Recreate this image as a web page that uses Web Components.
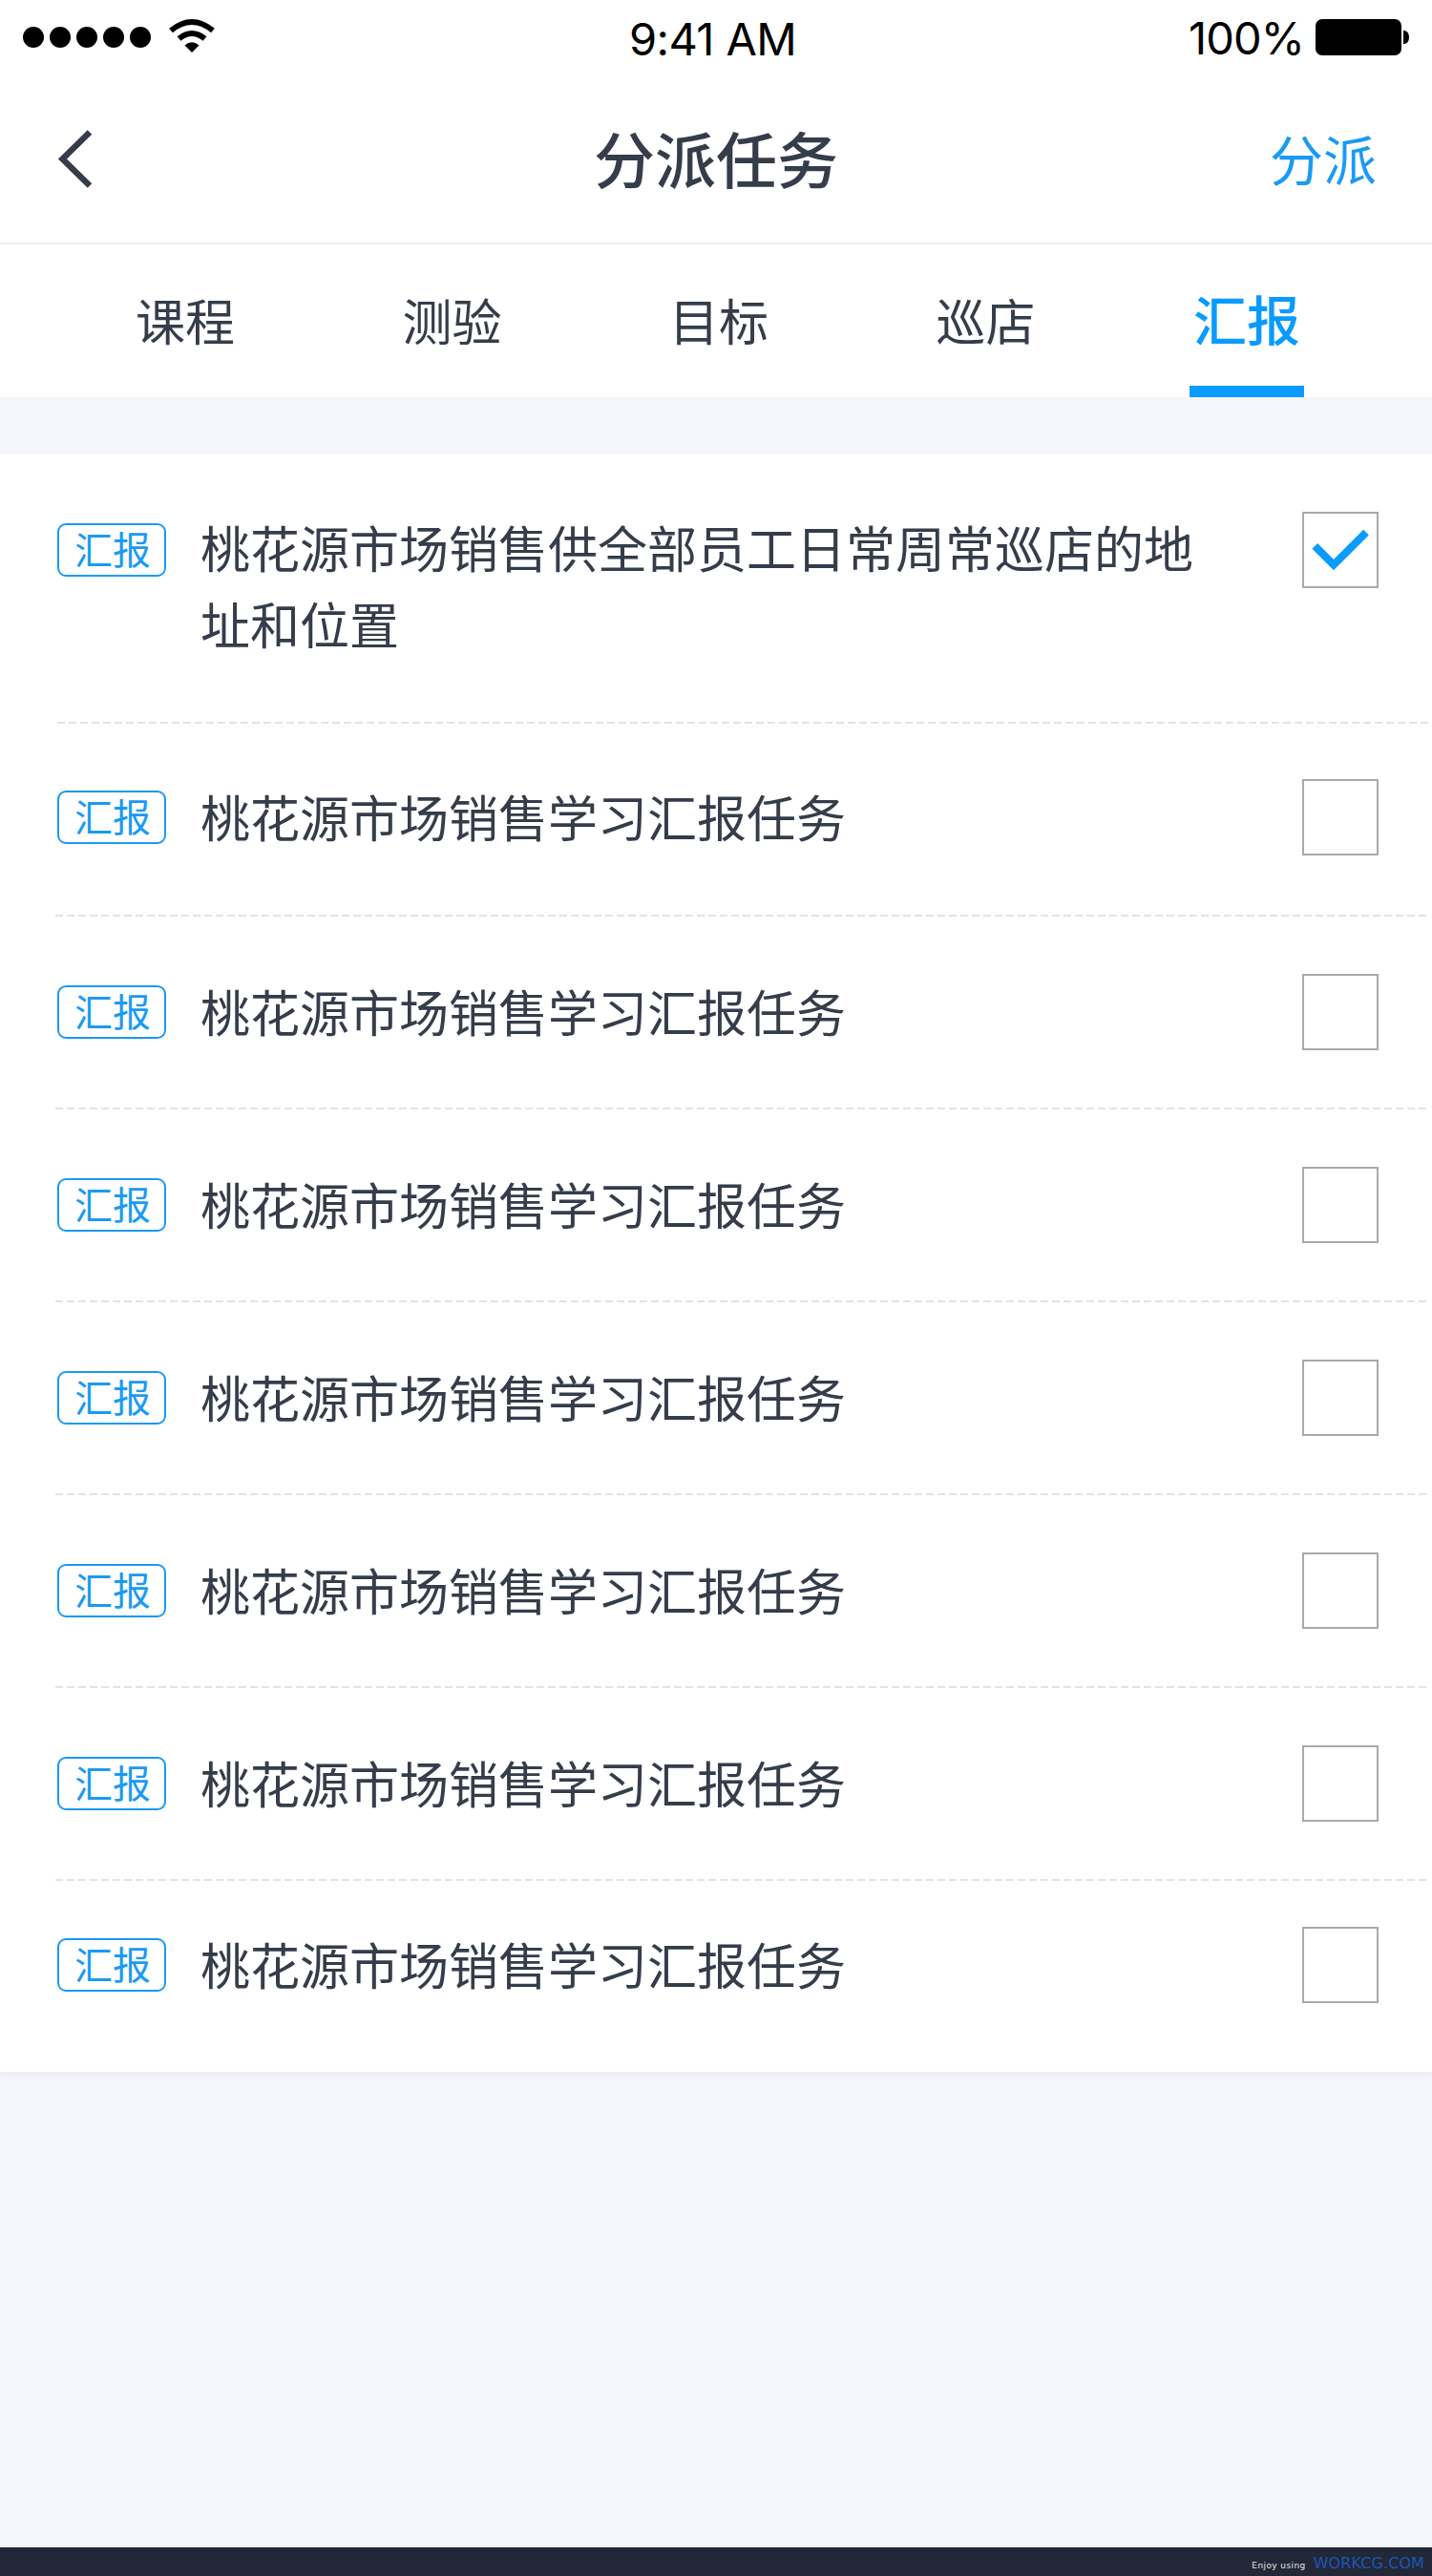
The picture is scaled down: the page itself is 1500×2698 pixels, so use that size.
<!DOCTYPE html>
<html lang="zh-CN">
<head>
<meta charset="UTF-8">
<title>分派任务</title>
<style>
  :root {
    --text-color: #353d4b;
    --primary-color: #0a9bff;
    --badge-color: #1a9af3;
    --page-color: #f5f6fb;
  }

  body {
    margin: 0;
    background: var(--page-color);
    color: var(--text-color);
    font-family: "Noto Sans CJK SC", sans-serif;
  }
</style>
</head>
<body>
<assign-task-page></assign-task-page>

<script>
/**
 * Barra de estado del dispositivo
 * @element status-bar
 */
class StatusBar extends HTMLElement {
  constructor() {
    super();
    this.attachShadow({ mode: "open" });
  }

  connectedCallback() {
    this.shadowRoot.innerHTML = `
      <style>
        :host {
          display: grid;
          grid-template-columns: 1fr auto 1fr;
          height: 80px;
          padding: 0 24px;
          box-sizing: border-box;
          background: #fff;
          color: #000;
          font: 400 47px/80px Inter, sans-serif;
        }
        .signal { padding-top: 18px; line-height: 0; }
        .time { letter-spacing: -0.6px; padding-right: 7px; padding-top: 1px; }
        .power { display: flex; justify-content: flex-end; letter-spacing: -0.9px; }
        .battery { margin: 18px 0 0 12px; }
      </style>
      <div class="signal">
        <svg width="204" height="42" viewBox="24 18 204 42">
          <circle cx="35" cy="39" r="11"/>
          <circle cx="63" cy="39" r="11"/>
          <circle cx="91" cy="39" r="11"/>
          <circle cx="119" cy="39" r="11"/>
          <circle cx="147" cy="39" r="11"/>
          <g fill="none" stroke="#000" stroke-width="6">
            <path d="M179 32Q201 14 223 32"/>
            <path d="M187.500 40.500Q201 29.500 214.500 40.500"/>
          </g>
          <path d="M193.500 47.500Q201 41 208.500 47.500L201 55Z"/>
        </svg>
      </div>
      <span class="time">9:41 AM</span>
      <div class="power">
        <span>100%</span>
        <svg class="battery" width="98" height="42" viewBox="1378 18 98 42">
          <rect x="1378" y="20" width="90" height="38" rx="7"/>
          <path d="M1470 32h1q5 1 5 7t-5 7h-1z"/>
        </svg>
      </div>
    `;
  }
}

/**
 * Cabecera con botón de volver, título y acción
 * @element nav-header
 */
class NavHeader extends HTMLElement {
  constructor() {
    super();
    this.attachShadow({ mode: "open" });
  }

  connectedCallback() {
    this.shadowRoot.innerHTML = `
      <style>
        :host {
          display: grid;
          grid-template-columns: 1fr auto 1fr;
          align-items: center;
          height: 176px;
          padding: 0 58px;
          box-sizing: border-box;
          background: #fff;
          border-bottom: 2px solid #e9eef3;
        }
        .back { display: block; margin-top: -3px; }
        h1 { margin: -7px 0 0; font-size: 64px; font-weight: 500; line-height: 96px; }
        .action { justify-self: end; margin-top: -4px; font-size: 56px; color: var(--badge-color); line-height: 84px; }
      </style>
      <svg class="back" width="44" height="68" viewBox="58 132 44 68" fill="none" stroke="currentColor" stroke-width="6.500">
        <path d="M94 138.500L65.500 166.500L94 194.500"/>
      </svg>
      <h1><slot></slot></h1>
      <span class="action"><slot name="action"></slot></span>
    `;
  }
}

/**
 * Pestaña de tipo de tarea
 * @element task-tab
 *
 * @attr {boolean} active - Marca la pestaña seleccionada
 */
class TaskTab extends HTMLElement {
  constructor() {
    super();
    this.attachShadow({ mode: "open" });
  }

  connectedCallback() {
    this.shadowRoot.innerHTML = `
      <style>
        :host {
          display: block;
          height: 160px;
          box-sizing: border-box;
          padding-top: 2px;
          font-size: 52px;
          line-height: 154px;
        }
        :host([active]) {
          width: 120px;
          padding-top: 0;
          margin-left: -14px;
          border-bottom: 12px solid var(--primary-color);
          color: var(--primary-color);
          font-size: 56px;
          font-weight: 500;
          text-align: center;
        }
      </style>
      <slot></slot>
    `;
  }
}

/**
 * Barra de pestañas
 * @element task-tabs
 */
class TaskTabs extends HTMLElement {
  constructor() {
    super();
    this.attachShadow({ mode: "open" });
  }

  connectedCallback() {
    this.shadowRoot.innerHTML = `
      <style>
        :host {
          display: flex;
          gap: 175.500px;
          padding-left: 142px;
          background: #fff;
        }
      </style>
      <slot></slot>
    `;
  }
}

/**
 * Casilla de selección
 * @element check-box
 *
 * @attr {boolean} checked - Indica si está marcada
 */
class CheckBox extends HTMLElement {
  constructor() {
    super();
    this.attachShadow({ mode: "open" });
  }

  connectedCallback() {
    const mark = this.hasAttribute("checked")
      ? `<polyline points="13.300,35.800 33,55.500 67,21.600" fill="none" stroke="var(--primary-color)" stroke-width="8"/>`
      : "";

    this.shadowRoot.innerHTML = `
      <style>
        :host { display: block; width: 80px; height: 80px; }
        svg { display: block; }
      </style>
      <svg width="80" height="80">
        <rect x="1" y="1" width="78" height="78" fill="none" stroke="#a9a9a9" stroke-width="2"/>
        ${mark}
      </svg>
    `;
  }
}

/**
 * Fila de tarea con etiqueta, texto y casilla
 * @element task-item
 *
 * @attr {string} label - Texto de la etiqueta
 * @attr {boolean} checked - Indica si la tarea está seleccionada
 */
class TaskItem extends HTMLElement {
  constructor() {
    super();
    this.attachShadow({ mode: "open" });
  }

  connectedCallback() {
    const checked = this.hasAttribute("checked") ? "checked" : "";

    this.shadowRoot.innerHTML = `
      <style>
        :host {
          display: flex;
          flex-direction: column;
          height: 202px;
        }
        .row {
          display: flex;
          flex: 1;
          align-items: flex-start;
          padding: 60px 56px 0 60px;
        }
        :host([checked]) { height: 282px; }
        :host(:last-child) { height: 200px; }
        :host(:nth-child(2)) .row { padding-top: 58px; }
        :host(:last-child) .row { padding-top: 48px; }
        .badge {
          width: 114px;
          height: 56px;
          margin: 12px 36px 0 0;
          padding-left: 2px;
          box-sizing: border-box;
          border: 2px solid var(--badge-color);
          border-radius: 9px;
          color: var(--badge-color);
          font-size: 40px;
          line-height: 48px;
          text-align: center;
        }
        .title {
          width: 1060px;
          margin-top: -1px;
          font-size: 52px;
          line-height: 80px;
        }
        :host([checked]) .title { margin-top: -3px; }
        check-box { margin-left: auto; }
        .divider {
          height: 2px;
          margin: 0 6px 0 58px;
          background: repeating-linear-gradient(90deg, #e3e3e3 0 8px, transparent 8px 12px);
        }
        :host([checked]) .divider { margin: 0 4px 0 60px; }
        :host(:last-child) .divider { display: none; }
      </style>
      <div class="row">
        <div class="badge">${this.getAttribute("label")}</div>
        <div class="title"><slot></slot></div>
        <check-box ${checked}></check-box>
      </div>
      <div class="divider"></div>
    `;
  }
}

/**
 * Tarjeta que agrupa las tareas
 * @element task-list
 */
class TaskList extends HTMLElement {
  constructor() {
    super();
    this.attachShadow({ mode: "open" });
  }

  connectedCallback() {
    this.shadowRoot.innerHTML = `
      <style>
        :host {
          display: block;
          margin-top: 60px;
          background: #fff;
          box-shadow: 0 2px 8px rgba(60, 80, 120, 0.08);
          clip-path: inset(0 0 -12px 0);
        }
      </style>
      <slot></slot>
    `;
  }
}

/**
 * Pie de página
 * @element credit-bar
 */
class CreditBar extends HTMLElement {
  constructor() {
    super();
    this.attachShadow({ mode: "open" });
  }

  connectedCallback() {
    this.shadowRoot.innerHTML = `
      <style>
        :host {
          display: flex;
          justify-content: flex-end;
          align-items: baseline;
          gap: 8px;
          height: 30px;
          margin-top: auto;
          padding-right: 8px;
          background: #222837;
          font-family: "DejaVu Sans", sans-serif;
          line-height: 34px;
        }
        .note { font-size: 9px; color: #e4e6ea; letter-spacing: 0.400px; }
        .site { font-size: 16px; color: #1b56b5; letter-spacing: 0.1px; }
      </style>
      <span class="note">Enjoy using</span>
      <span class="site">WORKCG.COM</span>
    `;
  }
}

/**
 * Página para asignar tareas
 * @element assign-task-page
 */
class AssignTaskPage extends HTMLElement {
  constructor() {
    super();
    this.attachShadow({ mode: "open" });
  }

  connectedCallback() {
    this._render();
  }

  _render() {
    const tabs = ["课程", "测验", "目标", "巡店", "汇报"];
    const tasks = [
      "桃花源市场销售供全部员工日常周常巡店的地址和位置",
      ...Array(7).fill("桃花源市场销售学习汇报任务"),
    ];

    this.shadowRoot.innerHTML = `
      <style>
        :host {
          display: flex;
          flex-direction: column;
          height: 2698px;
          overflow: hidden;
        }
      </style>
      <status-bar></status-bar>
      <nav-header>分派任务<span slot="action">分派</span></nav-header>
      <task-tabs>
        ${tabs.map((tab) => `<task-tab ${tab === "汇报" ? "active" : ""}>${tab}</task-tab>`).join("")}
      </task-tabs>
      <task-list>
        ${tasks.map((task, i) => `<task-item label="汇报" ${i === 0 ? "checked" : ""}>${task}</task-item>`).join("")}
      </task-list>
      <credit-bar></credit-bar>
    `;
  }
}

// Registrar los componentes
customElements.define("status-bar", StatusBar);
customElements.define("nav-header", NavHeader);
customElements.define("task-tab", TaskTab);
customElements.define("task-tabs", TaskTabs);
customElements.define("check-box", CheckBox);
customElements.define("task-item", TaskItem);
customElements.define("task-list", TaskList);
customElements.define("credit-bar", CreditBar);
customElements.define("assign-task-page", AssignTaskPage);
</script>
</body>
</html>
